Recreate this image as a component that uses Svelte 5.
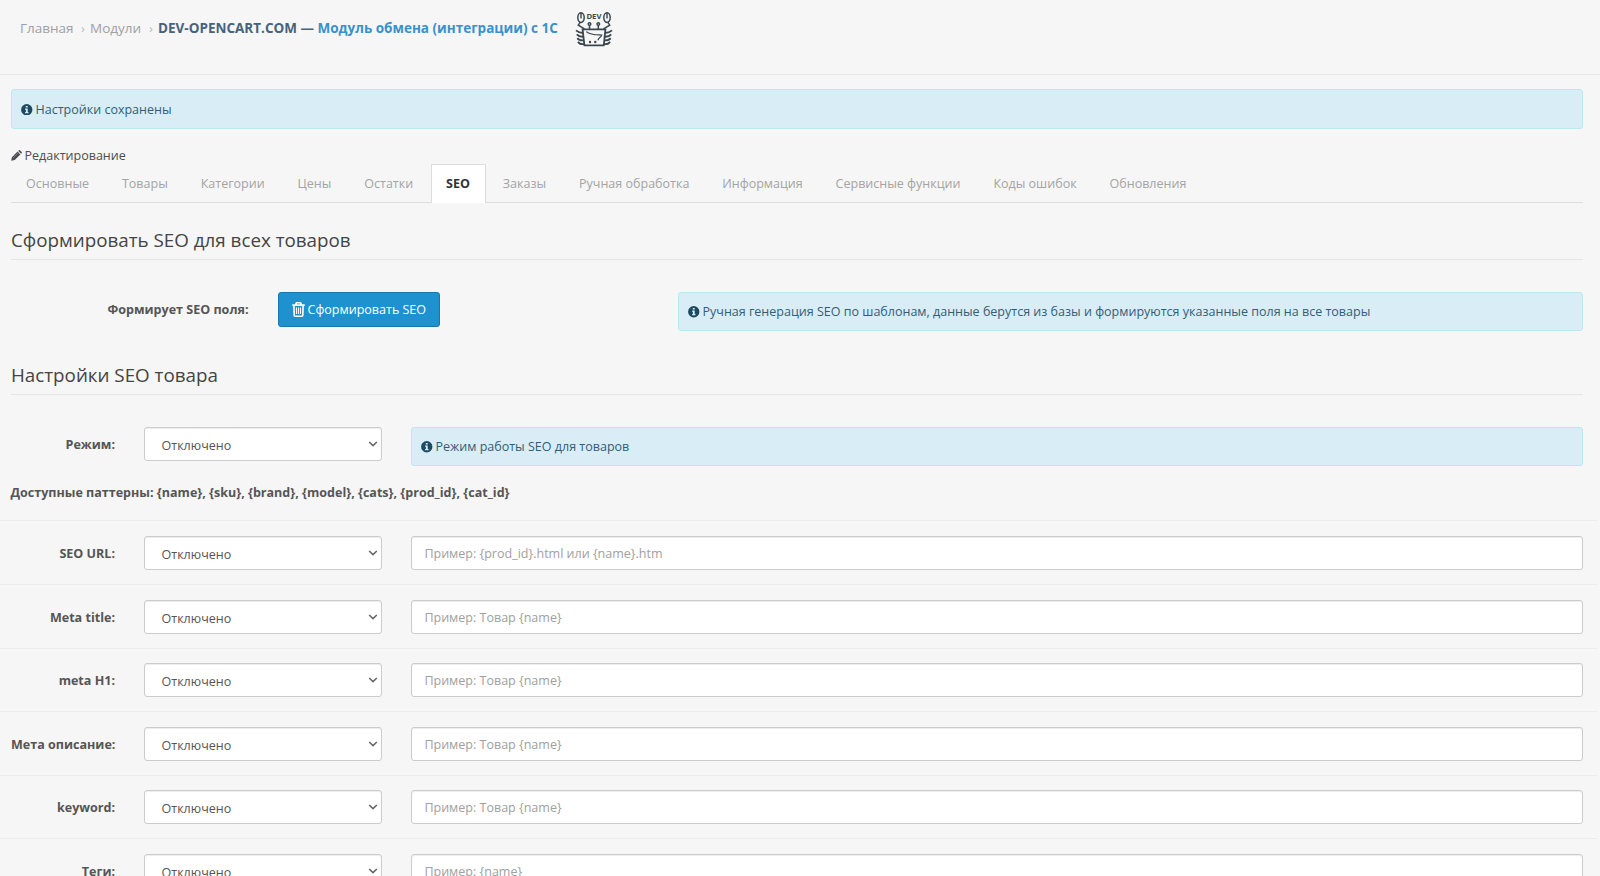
<script>
  const tabs = ['Основные', 'Товары', 'Категории', 'Цены', 'Остатки', 'SEO', 'Заказы', 'Ручная обработка', 'Информация', 'Сервисные функции', 'Коды ошибок', 'Обновления'];
  const rows = [
    ['SEO URL:', 'Пример: {prod_id}.html или {name}.htm'],
    ['Meta title:', 'Пример: Товар {name}'],
    ['meta H1:', 'Пример: Товар {name}'],
    ['Мета описание:', 'Пример: Товар {name}'],
    ['keyword:', 'Пример: Товар {name}'],
    ['Теги:', 'Пример: {name}']
  ];
  let active = $state('SEO');
</script>

{#snippet info()}
  <svg class="info" viewBox="0 0 12 12"><circle cx="6" cy="6" r="5.9" fill="#1c4a63" /><path d="M5 2h2v1.6H5zM4.3 4.8H7v3.6h.8v1.2H4.3V8.4h.8V6h-.8z" fill="#d9edf7" /></svg>
{/snippet}

{#snippet choice()}
  <div class="select"><span>Отключено</span><svg viewBox="0 0 10 6"><path d="M1.2 1l3.8 3.6L8.8 1" /></svg></div>
{/snippet}

<div class="page">
  <header>
    <span class="crumb c1">Главная</span><span class="sep">›</span>
    <span class="crumb c2">Модули</span><span class="sep">›</span>
    <strong>DEV-OPENCART.COM — <span>Модуль обмена (интеграции) с 1С</span></strong>
    <svg class="logo" viewBox="0 0 38 36" fill="none" stroke="#3b474f" stroke-width="1.5">
      <text x="18.9" y="7.6" text-anchor="middle" textLength="15" lengthAdjust="spacingAndGlyphs" fill="#3b474f" stroke="none">DEV</text>
      <ellipse cx="6" cy="6.6" rx="3.2" ry="4.8" /><ellipse cx="32" cy="6.6" rx="3.2" ry="4.8" />
      <path d="M6 1.5v6M32 1.5v6" stroke-width="1.4" />
      <path d="M5.3 11.2l-2 3 6.2 3.6M32.7 11.2l2 3-6.2 3.6" />
      <circle cx="14.5" cy="13" r="1.3" /><circle cx="23.3" cy="13" r="1.3" />
      <path d="M14.5 14v4M23.3 14v4" />
      <path d="M7.6 18.4h22.8L28.8 34.4H9.4z" stroke-width="1.8" />
      <path d="M11.3 20.6c3.7 3.4 9 3.2 15.5 3.4-.3 1.8-2.7 2.2-4 5.2" stroke-width="1.2" />
      <path d="M8 22c-3 0-5-.8-7-2.6M8.3 25.7c-3 .2-5-.5-6.5-2.3M8.6 29.4c-3 .2-5-.5-6.3-2.3M9 33c-3 .5-4.8-.3-6-2.3M30 22c3 0 5-.8 7-2.6M29.7 25.7c3 .2 5-.5 6.5-2.3M29.4 29.4c3 .2 5-.5 6.3-2.3M29 33c3 .5 4.8-.3 6-2.3" stroke-width="1.8" />
      <circle cx="15" cy="31" r="1.2" fill="#3b474f" stroke="none" /><circle cx="20.3" cy="31" r="1.2" fill="#3b474f" stroke="none" />
    </svg>
  </header>
  <main>
    <div class="alert saved">{@render info()}<span>Настройки сохранены</span></div>
    <div class="edit">
      <svg viewBox="0 0 11 11"><path d="M.2 10.8l.7-3.5L6.6 1.6l2.8 2.8-5.7 5.7zM7.3.9l.6-.6q.5-.5 1 0l1.8 1.8q.5.5 0 1l-.6.6z" fill="#4c4d50" /><path d="M2 8l5-5" stroke="#aaa" stroke-width=".5" /></svg>
      <span>Редактирование</span>
    </div>
    <nav>
      {#each tabs as tab}
        <button class="tab" class:active={active === tab} onclick={() => (active = tab)}>{tab}</button>
      {/each}
    </nav>
    <h2>Сформировать SEO для всех товаров</h2>
    <section class="generate">
      <span class="label">Формирует SEO поля:</span>
      <button class="primary">
        <svg viewBox="0 0 13 15" fill="none" stroke="#fff" stroke-width="1.6"><path d="M.3 3.1h12.4M4 3V1.6Q4 .8 4.8.8h3.4q.8 0 .8.8V3M1.9 3.1l.3 10.2q0 .9.9.9h6.8q.9 0 .9-.9l.3-10.2" /><path d="M4.5 5.5v6.4M6.5 5.5v6.4M8.5 5.5v6.4" stroke-width="1.1" /></svg>
        <span>Сформировать SEO</span>
      </button>
      <div class="alert">{@render info()}<span>Ручная генерация SEO по шаблонам, данные берутся из базы и формируются указанные поля на все товары</span></div>
    </section>
    <h2>Настройки SEO товара</h2>
    <section class="mode">
      <span class="label">Режим:</span>
      {@render choice()}
      <div class="alert">{@render info()}<span>Режим работы SEO для товаров</span></div>
    </section>
    <p><b>Доступные паттерны: {'{name}, {sku}, {brand}, {model}, {cats}, {prod_id}, {cat_id}'}</b></p>
  </main>
  {#each rows as [label, hint]}
    <div class="row">
      <span class="label">{label}</span>
      {@render choice()}
      <input placeholder={hint} aria-label={label} />
    </div>
  {/each}
</div>

<style>
  :global(body) { margin: 0; background: #f6f6f6; }
  .page { width: 1600px; height: 876px; overflow: hidden; background: #f6f6f6; color: #555; font: 12.53px/18px "Open Sans", sans-serif; }
  * { box-sizing: border-box; }
  svg { flex: none; display: block; }
  header { height: 75px; border-bottom: 1px solid #e8e8e8; padding: 9px 0 0 20px; display: flex; align-items: flex-start; line-height: 38px; white-space: nowrap; }
  .crumb { color: #a0a0a0; font-size: 13.5px; }
  .c1 { width: 61px; }
  .c2 { width: 59px; }
  .sep { color: #bbb; width: 9px; font-size: 13px; }
  strong { color: #47637c; font-size: 13.5px; font-weight: 700; width: 417px; }
  strong span { color: #3a90cd; }
  .logo { width: 38px; height: 36px; margin-top: 2px; }
  .logo text { font: 700 6.5px "Open Sans", sans-serif; }
  main { padding: 14px 17px 0 11px; height: 445.35px; }
  .alert { display: flex; align-items: center; gap: 3px; background: #d9edf7; border: 1px solid #bce8f1; border-radius: 3px; padding: 1px 9px 0; height: 39px; white-space: nowrap; }
  .alert span { color: #325d75; }
  .info { width: 11.5px; height: 11.5px; }
  .saved { height: 40px; }
  .edit { display: flex; align-items: center; gap: 3px; margin-left: -.5px; padding-top: 18px; height: 35px; color: #4c4d50; }
  .edit svg { width: 11px; height: 11px; }
  .edit span { padding-top: 1px; }
  nav { display: flex; gap: 1.4px; height: 39px; margin-left: -.4px; border-bottom: 1px solid #ddd; }
  .tab { border: 1px solid transparent; border-bottom: 0; background: none; font: inherit; color: #a4a4a4; padding: 0 15px 0 14.5px; height: 39px; white-space: nowrap; }
  .tab.active { background: #fff; border-color: #ddd; color: #333; font-weight: 700; }
  h2 { margin: 25px 0 0; height: 32px; border-bottom: 1px solid #e5e5e5; color: #444; font-size: 18.8px; font-weight: 400; line-height: 25px; }
  .generate, .mode { display: flex; align-items: flex-start; padding-top: 32px; }
  .label { font-weight: 700; font-size: 12.55px; text-align: right; white-space: nowrap; }
  .generate { height: 78px; }
  .generate .label { width: 237.5px; margin-right: 29.5px; line-height: 35px; }
  .generate .alert { margin-left: 238px; flex: 1; }
  .primary { width: 162px; height: 35px; padding: 1px 0 0 12.5px; display: flex; align-items: center; gap: 3px; border: 1px solid #1978ab; border-radius: 3px; background: #1e91cf; color: #fff; font: inherit; white-space: nowrap; }
  .primary svg { width: 13px; height: 15px; margin-top: -1px; }
  .mode .label { width: 104px; margin-right: 29px; line-height: 36px; }
  .mode .alert { flex: 1; }
  .select { display: flex; justify-content: space-between; width: 238px; height: 34px; margin-right: 29px; padding: 1px 3px 0 16.5px; border: 1px solid #ccc; border-radius: 3px; background: #fff; line-height: 33px; box-shadow: inset 0 1px 1px #00000013; }
  .select svg { width: 10px; height: 6px; margin-top: 12px; }
  .select path { fill: none; stroke: #666; stroke-width: 1.6; }
  p { margin: 18px 0 0 -.5px; font-size: 12.54px; }
  .row { display: flex; width: 1597px; height: 63.6px; padding: 14.7px 14px 0 11px; border-top: 1px solid #ececec; }
  .row .label { width: 104px; margin-right: 29px; line-height: 36px; }
  input { flex: 1; height: 34px; padding: 1px 12.4px 0; border: 1px solid #ccc; border-radius: 3px; background: #fff; font: inherit; box-shadow: inset 0 1px 1px #00000013; }
  input::placeholder { color: #a0a0a0; opacity: 1; }
</style>
